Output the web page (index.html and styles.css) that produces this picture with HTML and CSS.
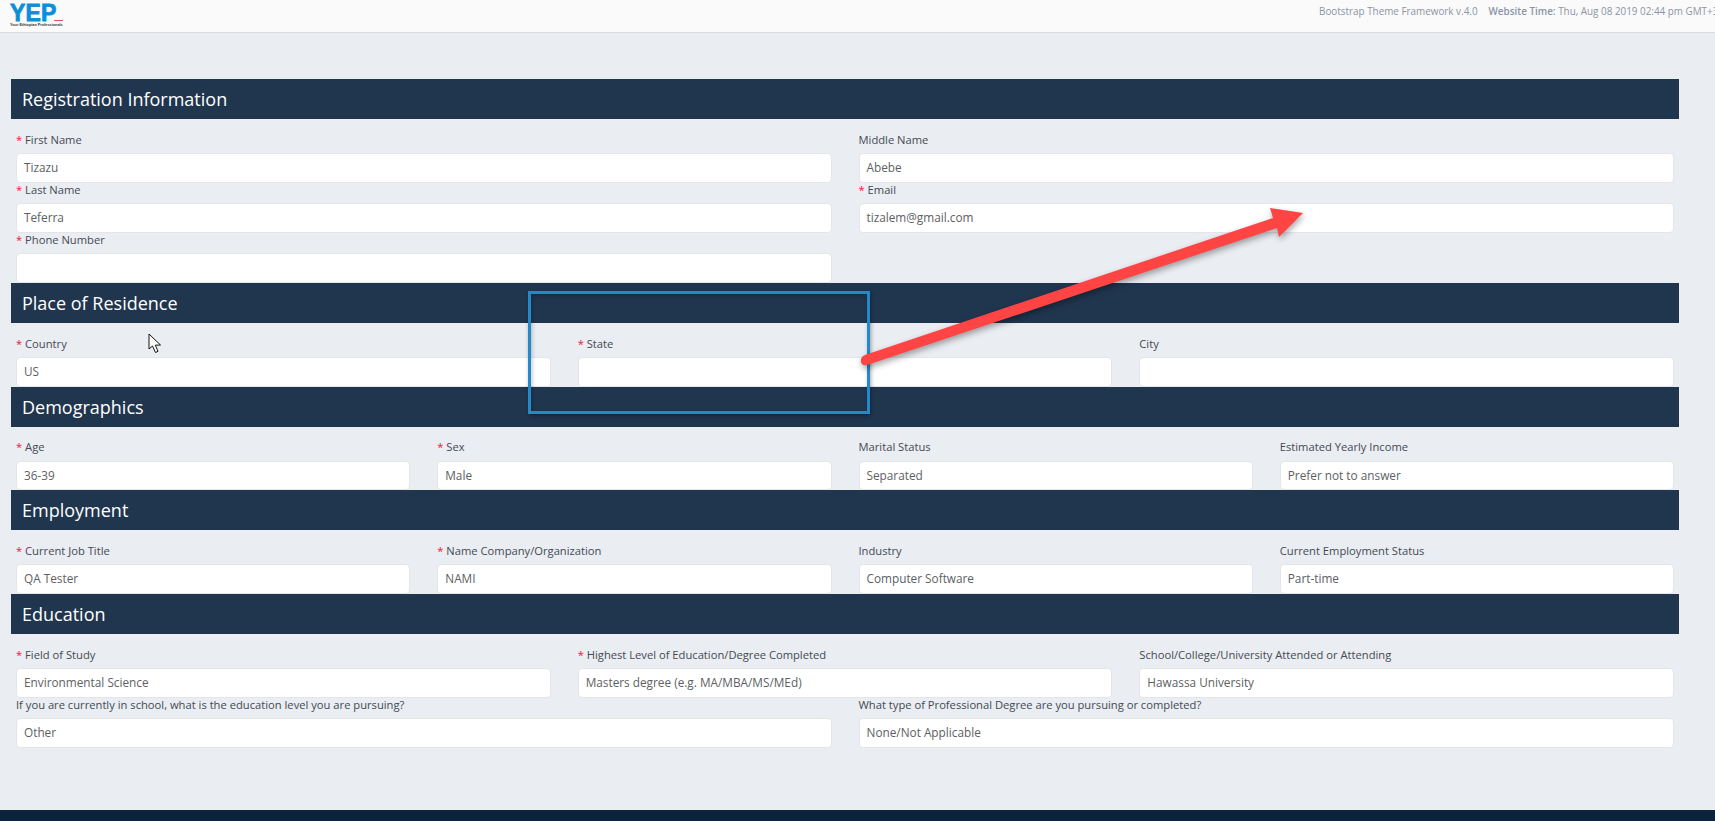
FILE: index.html
```html
<!DOCTYPE html>
<html lang="en">
<head>
    <meta charset="UTF-8">
    <meta name="viewport" content="width=device-width, initial-scale=1.0">
    <title>Registration Information</title>
    <link rel="stylesheet" href="styles.css">
</head>
<body>
    <header class="topbar">
        <div class="logo">
            <div class="logo-mark">YEP<span class="logo-dash"></span></div>
            <div class="logo-sub">Your Ethiopian Professionals</div>
        </div>
        <div class="topbar-info">
            <span>Bootstrap Theme Framework v.4.0</span>
            <span><b>Website Time:</b> Thu, Aug 08 2019 02:44 pm GMT+3</span>
        </div>
    </header>

    <main class="content">
        <section>
            <h2 class="section-title">Registration Information</h2>
            <div class="fields cols-2">
                <div class="field"><label><i>*</i> First Name</label><div class="input">Tizazu</div></div>
                <div class="field"><label>Middle Name</label><div class="input">Abebe</div></div>
                <div class="field"><label><i>*</i> Last Name</label><div class="input">Teferra</div></div>
                <div class="field"><label><i>*</i> Email</label><div class="input">tizalem@gmail.com</div></div>
                <div class="field"><label><i>*</i> Phone Number</label><div class="input"></div></div>
            </div>
        </section>

        <section>
            <h2 class="section-title">Place of Residence</h2>
            <div class="fields cols-3">
                <div class="field"><label><i>*</i> Country</label><div class="input">US</div></div>
                <div class="field"><label><i>*</i> State</label><div class="input"></div></div>
                <div class="field"><label>City</label><div class="input"></div></div>
            </div>
        </section>

        <section>
            <h2 class="section-title">Demographics</h2>
            <div class="fields cols-4">
                <div class="field"><label><i>*</i> Age</label><div class="input">36-39</div></div>
                <div class="field"><label><i>*</i> Sex</label><div class="input">Male</div></div>
                <div class="field"><label>Marital Status</label><div class="input">Separated</div></div>
                <div class="field"><label>Estimated Yearly Income</label><div class="input">Prefer not to answer</div></div>
            </div>
        </section>

        <section>
            <h2 class="section-title">Employment</h2>
            <div class="fields cols-4">
                <div class="field"><label><i>*</i> Current Job Title</label><div class="input">QA Tester</div></div>
                <div class="field"><label><i>*</i> Name Company/Organization</label><div class="input">NAMI</div></div>
                <div class="field"><label>Industry</label><div class="input">Computer Software</div></div>
                <div class="field"><label>Current Employment Status</label><div class="input">Part-time</div></div>
            </div>
        </section>

        <section>
            <h2 class="section-title">Education</h2>
            <div class="fields cols-3">
                <div class="field"><label><i>*</i> Field of Study</label><div class="input">Environmental Science</div></div>
                <div class="field"><label><i>*</i> Highest Level of Education/Degree Completed</label><div class="input">Masters degree (e.g. MA/MBA/MS/MEd)</div></div>
                <div class="field"><label>School/College/University Attended or Attending</label><div class="input">Hawassa University</div></div>
            </div>
            <div class="fields cols-2">
                <div class="field"><label>If you are currently in school, what is the education level you are pursuing?</label><div class="input">Other</div></div>
                <div class="field"><label>What type of Professional Degree are you pursuing or completed?</label><div class="input">None/Not Applicable</div></div>
            </div>
        </section>
    </main>

    <footer class="footer"></footer>

    <!-- screenshot annotations drawn on top of the page -->
    <div class="note-box"></div>
    <svg class="note-arrow" width="1715" height="821" viewBox="0 0 1715 821">
        <path d="M865 355 L1273 218 L1270 208 L1303 213 L1279 237 L1277 228 L867 365 Q862 366 861 362 Q860 357 865 355 Z" fill="#ff4444"/>
    </svg>
    <svg class="note-cursor" width="14" height="21" viewBox="0 0 14 21">
        <path d="M1 1 L1 16 L4.5 13 L7.5 19.5 L10 18.3 L7.3 12.2 L12.5 12 Z" fill="#fff" stroke="#111" stroke-width="1"/>
    </svg>
</body>
</html>
```

FILE: styles.css
```css
* {
    box-sizing: border-box;
}
html, body {
    height: 821px;
    overflow: hidden;
}
body {
    margin: 0;
    font-family: "Open Sans", sans-serif;
    background-color: #eaedf2;
    color: #454a52;
    position: relative;
}

.topbar {
    display: flex;
    height: 33px;
    background-color: #fafafa;
    border-bottom: 1px solid #d9dbdf;
    overflow: hidden;
    white-space: nowrap;
}
.logo {
    width: 1319px;
    flex: none;
    padding: 5px 0 0 10px;
}
.logo-mark {
    position: relative;
    width: 53px;
    font-family: "Liberation Sans", sans-serif;
    font-weight: bold;
    font-size: 23px;
    line-height: 16px;
    letter-spacing: 0.2px;
    color: #0d8fd6;
    -webkit-text-stroke: 0.8px #0d8fd6;
}
.logo-dash {
    position: absolute;
    left: 44px;
    bottom: 0;
    width: 9px;
    height: 1px;
    background-color: #e8505b;
}
.logo-sub {
    margin-top: 1px;
    font-family: "Liberation Sans", sans-serif;
    font-size: 3.8px;
    font-weight: bold;
    line-height: 6px;
    color: #333;
}
.topbar-info {
    display: flex;
    flex: none;
    gap: 11px;
    padding-top: 4px;
    font-size: 9.9px;
    line-height: 15px;
    color: #8b95a5;
}
.topbar-info b {
    font-weight: 600;
}

.content {
    margin: 46.33px 36px 0 11px;
}
.section-title {
    margin: 0;
    height: 40px;
    padding-left: 11px;
    font-size: 18px;
    font-weight: 400;
    line-height: 41px;
    color: #fff;
    background-color: #20364f;
}
.fields {
    display: grid;
    column-gap: 27px;
    padding: 0 5px;
}
.section-title + .fields {
    padding-top: 13.67px;
}
.cols-2 {
    grid-template-columns: repeat(2, 1fr);
}
.cols-3 {
    grid-template-columns: repeat(3, 1fr);
}
.cols-4 {
    grid-template-columns: repeat(4, 1fr);
}
.field label {
    display: block;
    height: 20.5px;
    font-size: 11.2px;
    line-height: 14.5px;
    white-space: nowrap;
}
.field label i {
    font-style: normal;
    color: #f0143c;
}
.input {
    height: 29.5px;
    padding: 0 7px;
    font-size: 11.8px;
    line-height: 26.5px;
    color: #5d5f63;
    background-color: #fff;
    border: 1px solid #e3e5e8;
    border-radius: 4px;
}

.footer {
    position: absolute;
    left: 0;
    right: 0;
    top: 810px;
    height: 11px;
    background-color: #0b233d;
}

.note-box {
    position: absolute;
    left: 528px;
    top: 291px;
    width: 342px;
    height: 123px;
    border: 3px solid #2389c9;
    box-shadow: 1px 2px 4px rgba(0, 0, 0, 0.35), inset 1px 2px 4px rgba(0, 0, 0, 0.25);
}
.note-arrow {
    position: absolute;
    left: 0;
    top: 0;
    filter: drop-shadow(1px 3px 3px rgba(0, 0, 0, 0.35));
}
.note-cursor {
    position: absolute;
    left: 148px;
    top: 333px;
}
```
